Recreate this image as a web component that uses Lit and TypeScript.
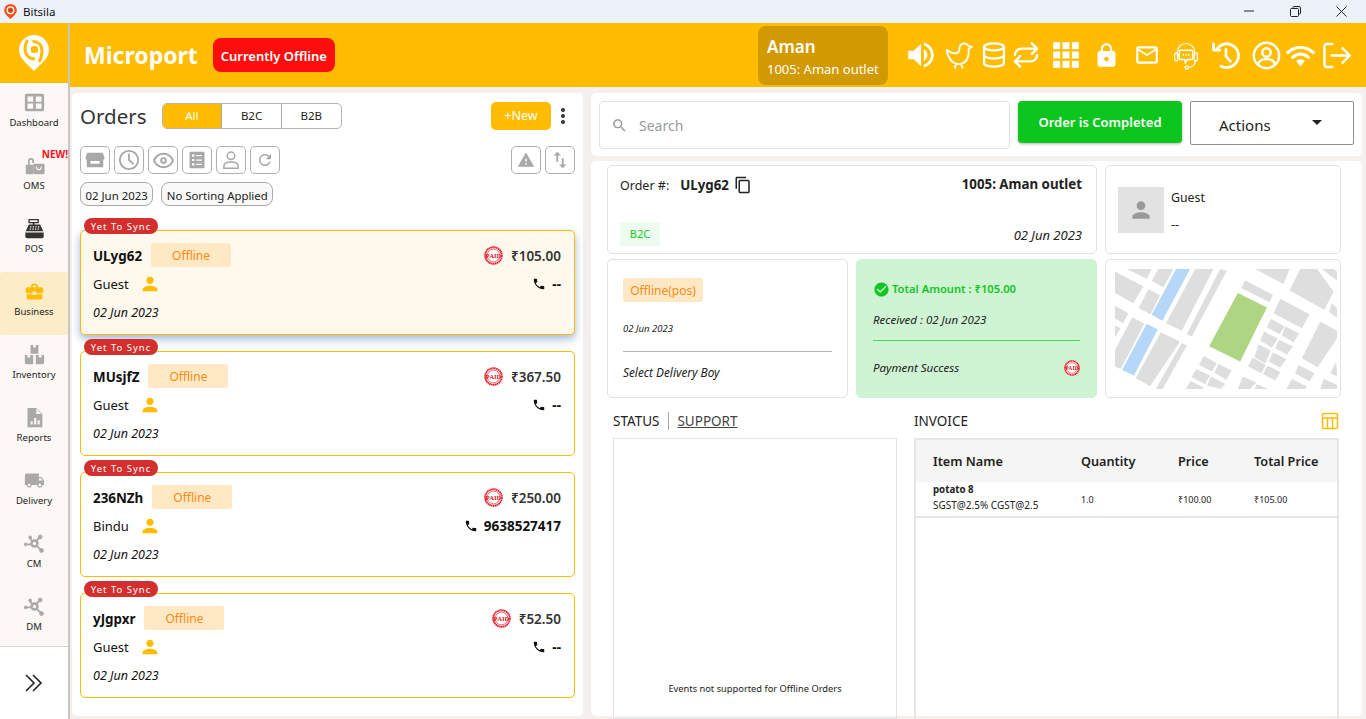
import { LitElement, css, html, svg } from 'lit'
import { customElement, property } from 'lit/decorators.js'

const P = {
  volume: 'M3 9v6h4l5 5V4L7 9H3zm13.5 3c0-1.77-1.02-3.29-2.5-4.03v8.05c1.48-.73 2.5-2.25 2.5-4.02zM14 3.23v2.06c2.89.86 5 3.54 5 6.71s-2.11 5.85-5 6.71v2.06c4.01-.91 7-4.49 7-8.77s-2.99-7.86-7-8.77z',
  lock: 'M18 8h-1V6c0-2.76-2.24-5-5-5S7 3.24 7 6v2H6c-1.1 0-2 .9-2 2v10c0 1.1.9 2 2 2h12c1.1 0 2-.9 2-2V10c0-1.1-.9-2-2-2zm-6 9c-1.1 0-2-.9-2-2s.9-2 2-2 2 .9 2 2-.9 2-2 2zm3.1-9H8.9V6c0-1.71 1.39-3.1 3.1-3.1 1.71 0 3.1 1.39 3.1 3.1v2z',
  mail: 'M20 4H4c-1.1 0-2 .9-2 2v12c0 1.1.9 2 2 2h16c1.1 0 2-.9 2-2V6c0-1.1-.9-2-2-2zm0 14H4V8l8 5 8-5v10zm-8-7L4 6h16l-8 5z',
  phone: 'M6.62 10.79c1.44 2.83 3.76 5.14 6.59 6.59l2.2-2.2c.27-.27.67-.36 1.02-.24 1.12.37 2.33.57 3.57.57.55 0 1 .45 1 1V20c0 .55-.45 1-1 1-9.39 0-17-7.61-17-17 0-.55.45-1 1-1h3.5c.55 0 1 .45 1 1 0 1.25.2 2.45.57 3.57.11.35.03.74-.25 1.02l-2.2 2.2z',
  person: 'M12 12c2.21 0 4-1.79 4-4s-1.79-4-4-4-4 1.79-4 4 1.79 4 4 4zm0 2c-2.67 0-8 1.34-8 4v2h16v-2c0-2.66-5.33-4-8-4z',
  search: 'M15.5 14h-.79l-.28-.27C15.41 12.59 16 11.11 16 9.5 16 5.91 13.09 3 9.5 3S3 5.91 3 9.5 5.91 16 9.5 16c1.61 0 3.09-.59 4.23-1.57l.27.28v.79l5 4.99L20.49 19l-4.99-5zm-6 0C7.01 14 5 11.99 5 9.5S7.01 5 9.5 5 14 7.01 14 9.5 11.99 14 9.5 14z',
  copy: 'M16 1H4c-1.1 0-2 .9-2 2v14h2V3h12V1zm3 4H8c-1.1 0-2 .9-2 2v14c0 1.1.9 2 2 2h11c1.1 0 2-.9 2-2V7c0-1.1-.9-2-2-2zm0 16H8V7h11v14z',
  check: 'M12 2C6.48 2 2 6.48 2 12s4.48 10 10 10 10-4.48 10-10S17.52 2 12 2zm-2 15l-5-5 1.41-1.41L10 14.17l7.59-7.59L19 8l-9 9z',
  warning: 'M1 21h22L12 2 1 21zm12-3h-2v-2h2v2zm0-4h-2v-4h2v4z',
  refresh: 'M17.65 6.35C16.2 4.9 14.21 4 12 4c-4.42 0-7.99 3.58-7.99 8s3.57 8 7.99 8c3.73 0 6.84-2.55 7.73-6h-2.08c-.82 2.33-3.04 4-5.65 4-3.31 0-6-2.69-6-6s2.69-6 6-6c1.66 0 3.14.69 4.22 1.78L13 11h7V4l-2.35 2.35z',
  eye: 'M12 6c3.8 0 7.2 2.1 8.8 6-1.6 3.9-5 6-8.8 6s-7.2-2.1-8.8-6C4.8 8.1 8.2 6 12 6zm0-2C7 4 2.7 7.3 1 12c1.7 4.7 6 8 11 8s9.3-3.3 11-8c-1.7-4.7-6-8-11-8zm0 4.5a3.5 3.5 0 1 0 0 7 3.5 3.5 0 0 0 0-7zm0 2a1.5 1.5 0 1 1 0 3 1.5 1.5 0 0 1 0-3z',
  swap: 'M16 17.01V10h-2v7.01h-3L15 21l4-3.99h-3zM9 3L5 6.99h3V14h2V6.99h3L9 3z',
  bag: 'M10 16v-1H3.01L3 19c0 1.11.89 2 2 2h14c1.11 0 2-.89 2-2v-4h-7v1h-4zm10-9h-4.01V5l-2-2h-4l-2 2v2H4c-1.1 0-2 .9-2 2v3c0 1.11.89 2 2 2h6v-2h4v2h6c1.1 0 2-.9 2-2V9c0-1.1-.9-2-2-2zm-6 0h-4V5h4v2z',
  truck: 'M20 8h-3V4H3c-1.1 0-2 .9-2 2v11h2c0 1.66 1.34 3 3 3s3-1.34 3-3h6c0 1.66 1.34 3 3 3s3-1.34 3-3h2v-5l-3-4zM6 18.5c-.83 0-1.5-.67-1.5-1.5s.67-1.5 1.5-1.5 1.5.67 1.5 1.5-.67 1.5-1.5 1.5zm13.5-9l1.96 2.5H17V9.5h2.5zm-1.5 9c-.83 0-1.5-.67-1.5-1.5s.67-1.5 1.5-1.5 1.5.67 1.5 1.5-.67 1.5-1.5 1.5z',
  store: 'M3 5.5C3 4.7 3.7 4 4.5 4h15c.8 0 1.5.7 1.5 1.5L22.5 10a2.4 2.4 0 0 1-1.5 1.6V19a1 1 0 0 1-1 1H4a1 1 0 0 1-1-1v-7.4A2.4 2.4 0 0 1 1.5 10L3 5.5zM7 13v3h10v-3H7z',
}

const fill = (d: string) => svg`<path d=${d} fill="currentColor"/>`

// header icons, w is the width of the slot each one sits in
const headerIcons = [
  { w: 34, size: 34, g: fill(P.volume) },
  { w: 42, size: 28, g: svg`<path fill="none" stroke="currentColor" stroke-width="1.6" stroke-linecap="round" stroke-linejoin="round" d="M1.5 7.5C4 9.5 7 11 9.5 10.5c2-.4 3-2 3-4.500a4 4 0 0 1 7.500-1.800l3 .8-2.800 1.600c.5 5-.5 9-3.200 11.400-3 2.600-8 2.500-11-.5C3.500 14.500 1.500 11 1.500 7.500zM9.500 19.500L8.500 23M13.500 19.500l1.500 3.500"/>` },
  { w: 28, size: 30, g: svg`<g fill="none" stroke="currentColor" stroke-width="2"><ellipse cx="12" cy="5" rx="8.5" ry="3"/><path d="M3.5 5v14c0 1.7 3.8 3 8.5 3s8.5-1.3 8.5-3V5M3.5 12c0 1.7 3.8 3 8.5 3s8.5-1.3 8.5-3"/></g>` },
  { w: 36, size: 28, g: svg`<g fill="none" stroke="currentColor" stroke-width="2" stroke-linecap="round" stroke-linejoin="round"><path d="M17 2l4.5 4.5L17 11M21 6.5H8A5.5 5.5 0 0 0 2.500 12M7 22l-4.500-4.500L7 13M3 17.500h13a5.500 5.500 0 0 0 5.500-5.500"/></g>` },
  { w: 44, size: 28, g: svg`<g fill="currentColor"><rect x="1" y="1" width="6" height="6"/><rect x="9" y="1" width="6" height="6"/><rect x="17" y="1" width="6" height="6"/><rect x="1" y="9" width="6" height="6"/><rect x="9" y="9" width="6" height="6"/><rect x="17" y="9" width="6" height="6"/><rect x="1" y="17" width="6" height="6"/><rect x="9" y="17" width="6" height="6"/><rect x="17" y="17" width="6" height="6"/></g>` },
  { w: 36, size: 27, g: fill(P.lock) },
  { w: 46, size: 26, g: fill(P.mail) },
  { w: 32, size: 33, g: svg`<g fill="none" stroke="currentColor" stroke-width=".9"><path d="M5.5 13V9.5a6.5 6.5 0 0 1 13 0V13"/><rect x="3.5" y="10" width="2.5" height="6" rx="1.2"/><rect x="18" y="10" width="2.5" height="6" rx="1.2"/><path d="M19 16c0 3-2.5 5-5.5 5"/><circle cx="12.5" cy="21" r="1.2"/><path d="M8 8h8a1 1 0 0 1 1 1v5a1 1 0 0 1-1 1h-3l-1.500 2.500L11 15H8a1 1 0 0 1-1-1V9a1 1 0 0 1 1-1z" stroke-width="1.1"/><path d="M9.500 11.500h1M11.500 11.500h1M13.500 11.500h1" stroke-width="1.2"/></g>` },
  { w: 48, size: 30, g: svg`<g fill="none" stroke="currentColor" stroke-width="2.2" stroke-linecap="round" stroke-linejoin="round"><path d="M4.5 7.5A9.5 9.5 0 1 1 12 22c-1.5 0-3-.4-4-1"/><path d="M2 3v5h5M12 7.5V13l3.500 4"/></g>` },
  { w: 32, size: 29, g: svg`<g fill="none" stroke="currentColor" stroke-width="2"><circle cx="12" cy="12" r="10.5"/><circle cx="12" cy="9.5" r="3.5"/><path d="M5 19c1-3 3.5-4 7-4s6 1 7 4"/></g>` },
  { w: 36, size: 29, g: svg`<g fill="none" stroke="currentColor" stroke-width="2.6" stroke-linecap="round"><path d="M1.5 9.5c6-5.5 15-5.5 21 0M5.5 13.5c4-3.5 9-3.5 13 0"/></g><path d="M8.5 16.5c2-1.5 5-1.5 7 0L12 21z" fill="currentColor"/>` },
  { w: 36, size: 29, g: svg`<g fill="none" stroke="currentColor" stroke-width="2" stroke-linecap="round" stroke-linejoin="round"><path d="M8.5 2.5H4a2 2 0 0 0-2 2v15a2 2 0 0 0 2 2h4.500M8 12h14.500M17 6l6 6-6 6"/></g>` },
]

const hub = svg`<g fill="currentColor" stroke="currentColor"><path d="M2 13h7M18 5l-5 5M19 19l-5.5-5.5M6.5 5.5L10 10" stroke-width="2.2" fill="none"/><circle cx="12" cy="12" r="3.4" fill="none" stroke-width="2.8"/><circle cx="2" cy="13" r="1.6"/><circle cx="18.5" cy="4.5" r="2.2"/><circle cx="20" cy="20" r="2.2"/><circle cx="7" cy="5" r="1.6"/></g>`

const navItems = [
  { label: 'Dashboard', g: svg`<path fill="currentColor" fill-rule="evenodd" d="M3 2h18a2 2 0 0 1 2 2v16a2 2 0 0 1-2 2H3a2 2 0 0 1-2-2V4a2 2 0 0 1 2-2zm1 3v6h6.5V5H4zm9.5 0v6H20V5h-6.5zM4 13v6h6.5v-6H4zm9.5 0v6H20v-6h-6.5z"/>` },
  { label: 'OMS', isNew: true, g: svg`<g fill="currentColor"><path d="M2 12a1 1 0 0 1 1-1h7.5v11H3a1 1 0 0 1-1-1z"/><path d="M4.5 11V7a3.5 3.5 0 0 1 7 0v2h-2V7a1.5 1.5 0 0 0-3 0v4z"/><path fill-rule="evenodd" d="M12 10h10a1.5 1.5 0 0 1 1.5 1.5V20a2 2 0 0 1-2 2h-9a2 2 0 0 1-2-2v-8.500A1.500 1.500 0 0 1 12 10zm1.500 3c.3 3 1.700 4.500 3.500 4.500s3.200-1.500 3.500-4.500h-1.300c-.3 2-1 3-2.200 3s-1.900-1-2.200-3z"/></g>` },
  { label: 'POS', dark: true, g: svg`<g fill="currentColor"><path fill-rule="evenodd" d="M5 1h12v5h-5v1.5h6.5L22 15H2l3.5-7.5H10V6H5zm1.5 1.5v2h9v-2zM7 9.5v1.3h1.5V9.5zm3 0v1.3h1.5V9.5zm3 0v1.3h1.5V9.5zm3 0v1.3h1.5V9.5zM6.500 12v1.300H8V12zm3 0v1.300H11V12zm3 0v1.300H14V12zm3 0v1.300H17V12z"/><path d="M1.5 16.5h21V21a2 2 0 0 1-2 2h-17a2 2 0 0 1-2-2z"/></g>` },
  { label: 'Business', active: true, g: fill(P.bag) },
  { label: 'Inventory', g: svg`<g fill="currentColor"><path d="M7.5 1h3v3h3V1h3v10h-9z"/><path d="M1 12.5h3v3h3v-3h3.5V23H3a2 2 0 0 1-2-2z"/><path d="M13.5 12.5H17v3h3v-3h3V21a2 2 0 0 1-2 2h-7.5z"/></g>` },
  { label: 'Reports', g: svg`<path fill="currentColor" fill-rule="evenodd" d="M4 1h10l7 7v15H4zm10 1v6h6zM7.5 16.5V20h2.5v-3.5zm4-4V20H14v-7.5zm4 2.500v5H18v-5z"/>` },
  { label: 'Delivery', g: fill(P.truck) },
  { label: 'CM', g: hub },
  { label: 'DM', g: hub },
]

const orders = [
  { id: 'ULyg62', name: 'Guest', phone: '--', price: '₹105.00', active: true },
  { id: 'MUsjfZ', name: 'Guest', phone: '--', price: '₹367.50' },
  { id: '236NZh', name: 'Bindu', phone: '9638527417', price: '₹250.00' },
  { id: 'yJgpxr', name: 'Guest', phone: '--', price: '₹52.50' },
]

const toolIcons = [
  { size: 22, g: fill(P.store) },
  { size: 22, g: svg`<g fill="none" stroke="currentColor" stroke-width="2"><circle cx="12" cy="12" r="10"/><path d="M12 5.5V12l4.5 4" stroke-linecap="round"/></g>` },
  { size: 23, g: fill(P.eye) },
  { size: 20, g: svg`<path fill="currentColor" fill-rule="evenodd" d="M4 2h16a1 1 0 0 1 1 1v18a1 1 0 0 1-1 1H4a1 1 0 0 1-1-1V3a1 1 0 0 1 1-1zm2 3.5V8h3V5.5zm5 .5v1.500h7V6zm-5 4.800v2.500h3v-2.500zm5 .5v1.500h7v-1.500zM6 16v2.500h3V16zm5 .5V18h7v-1.500z"/>` },
  { size: 20, g: svg`<g fill="none" stroke="currentColor" stroke-width="1.8"><circle cx="12" cy="7" r="4.5"/><path d="M3.5 22v-2.5c0-3 3-5 8.5-5s8.5 2 8.5 5V22z"/></g>` },
  { size: 18, g: fill(P.refresh) },
]

const mapGray = [
  '45,40 130,85 100,135 45,105', '80,33 155,33 140,62', '175,33 220,33 190,88 155,68', '145,93 180,112 152,168 116,150',
  '285,33 340,33 245,218 198,195', '360,33 380,38 275,235 260,228', '45,143 85,165 70,195 45,182', '45,203 62,210 45,237',
  '97,177 133,197 62,332 45,325 45,275', '182,222 240,250 150,384 107,360', '245,255 260,262 188,392 167,392',
  '435,67 518,110 508,132 423,90', '465,33 568,33 550,78', '600,33 650,33 700,100 672,155 568,97', '665,33 700,33 710,40 710,68',
  '540,122 628,168 605,210 520,165', '512,182 553,205 538,228 500,207', '555,205 597,226 580,252 545,232', '492,220 533,242 515,268 480,248',
  '537,245 578,265 560,290 525,270', '475,258 512,278 495,316 462,297', '518,282 558,303 540,328 505,310', '457,298 497,320 483,345 443,325',
  '502,322 540,342 525,367 488,347', '660,190 710,218 710,240 652,327 605,300', '695,135 710,150 710,178 686,162', '595,320 643,345 628,370 584,345',
  '708,310 710,355 690,345', '575,362 620,385 615,392 558,392', '670,362 710,380 710,392 660,392', '310,293 350,315 335,340 297,320',
  '355,317 395,337 378,365 343,343', '288,332 330,352 315,378 275,357', '333,355 375,377 362,392 320,382', '272,368 310,388 310,392 257,392',
  '428,355 468,373 450,392 413,392', '470,378 505,392 462,392',
]

function icon(g: unknown, size: number) {
  return html`<svg width=${size} height=${size} viewBox="0 0 24 24">${g}</svg>`
}

function paid(size: number) {
  return html`<svg width=${size} height=${size} viewBox="0 0 24 24">
    <circle cx="12" cy="12" r="10.5" fill="#fff" stroke="#ea1c2a" stroke-width="2.4" stroke-dasharray="2 .5"/>
    <circle cx="12" cy="12" r="8" fill="none" stroke="#ea1c2a" stroke-width=".8"/>
    <text x="12" y="15" text-anchor="middle" font-size="8.5" font-weight="800" fill="#d81b28" font-family="Liberation Serif, serif">PAID</text>
  </svg>`
}

@customElement('order-card')
class OrderCard extends LitElement {
  static styles = css`
    :host { display: block; }
    .card {
      position: relative;
      height: 105px;
      box-sizing: border-box;
      border: 1px solid #ffbc00;
      border-radius: 5px;
      background: #fff;
      padding: 12px 13px 0 12px;
      color: #111;
    }
    .card.active {
      background: #fff9ed;
      box-shadow: 0 4px 8px rgba(40, 100, 170, .45);
    }
    .sync {
      position: absolute;
      left: 3px;
      top: -13px;
      height: 16px;
      width: 74px;
      border-radius: 8px;
      background: #d32f2f;
      color: #fff;
      font-size: 9.5px;
      letter-spacing: 1px;
      line-height: 17px;
      text-align: center;
    }
    .row { display: flex; align-items: center; justify-content: space-between; }
    .row1 { height: 24px; }
    .row2 { height: 24px; margin-top: 5px; font-size: 13px; }
    .left { display: flex; align-items: center; }
    .id { font-weight: 700; font-size: 13.4px; margin-right: 9px; padding-top: 1px; }
    .tag {
      width: 80px;
      height: 24px;
      line-height: 26px;
      text-align: center;
      background: #ffe9c4;
      color: #ff8a14;
      font-size: 12px;
      border-radius: 2px;
    }
    .price { font-weight: 600; font-size: 13.5px; color: #333; margin-left: 8px; padding-top: 1px; }
    .stamp { display: flex; }
    .who { color: #ffbc00; margin-left: 10px; display: flex; }
    .phone { display: flex; align-items: center; gap: 6px; font-weight: 700; font-size: 13.5px; }
    .date { font-style: italic; font-size: 12.5px; margin-top: 8px; line-height: 18px; }
  `
  @property({ type: Object }) order: any = {}

  render() {
    const o = this.order
    return html`
      <div class="card ${o.active ? 'active' : ''}">
        <div class="sync">Yet To Sync</div>
        <div class="row row1">
          <div class="left"><span class="id">${o.id}</span><span class="tag">Offline</span></div>
          <div class="left"><span class="stamp">${paid(19)}</span><span class="price">${o.price}</span></div>
        </div>
        <div class="row row2">
          <div class="left">${o.name}<span class="who">${icon(fill(P.person), 22)}</span></div>
          <div class="phone">${icon(fill(P.phone), 14)}${o.phone}</div>
        </div>
        <div class="date">02 Jun 2023</div>
      </div>
    `
  }
}

@customElement('app-root')
class AppRoot extends LitElement {
  static styles = css`
    :host {
      display: flex;
      flex-direction: column;
      height: 100vh;
      overflow: hidden;
      font-family: "Noto Sans", "Open Sans", sans-serif;
      background: #f4f0ee;
      color: #222;
    }
    .titlebar {
      height: 23px;
      flex: none;
      background: #edf2fa;
      display: flex;
      align-items: center;
      font-size: 11.5px;
      color: #111;
      padding-left: 4px;
    }
    .titlebar .name { margin-left: 6px; }
    .winctl { margin-left: auto; margin-right: 2px; display: flex; }
    .winctl span { width: 46px; display: flex; justify-content: center; color: #222; }
    .frame { flex: 1; display: flex; min-height: 0; }

    .side {
      width: 68px;
      flex: none;
      border-right: 2px solid #c9c5c2;
      background: #fdf8f5;
      display: flex;
      flex-direction: column;
    }
    .logo {
      height: 60px;
      flex: none;
      background: #ffbc00;
      display: flex;
      align-items: center;
      justify-content: center;
      color: #fff;
    }
    .nav { flex: 1; min-height: 0; overflow: hidden; }
    .nav-item {
      position: relative;
      height: 63px;
      box-sizing: border-box;
      padding-top: 9px;
      display: flex;
      flex-direction: column;
      align-items: center;
      gap: 3px;
      color: #a9a9a9;
      border-radius: 3px;
    }
    .nav-item span { font-size: 9.5px; color: #222; line-height: 14px; }
    .nav-item.dark { color: #333; }
    .nav-item.active { background: #fdecc8; color: #ffbc00; }
    .new {
      position: absolute;
      right: 0;
      top: 1px;
      color: #ff0d1d;
      font-size: 10px;
      font-weight: 700;
      font-style: normal;
    }
    .side-foot {
      height: 72px;
      flex: none;
      background: #fff;
      border-top: 1px solid #d5d5d5;
      display: flex;
      align-items: center;
      justify-content: center;
      color: #222;
    }

    .main { flex: 1; min-width: 0; display: flex; flex-direction: column; }
    .topbar {
      height: 64px;
      flex: none;
      background: #ffbc00;
      display: flex;
      align-items: center;
      color: #fff;
      padding-left: 14px;
    }
    .brand { font-size: 23px; font-weight: 700; margin-right: 15px; }
    .offline {
      height: 34px;
      line-height: 36px;
      width: 122px;
      text-align: center;
      background: #ff0d0d;
      border-radius: 8px;
      font-size: 13px;
      font-weight: 600;
    }
    .outlet {
      margin-left: auto;
      width: 130px;
      height: 59px;
      box-sizing: border-box;
      background: #d19a00;
      border-radius: 8px;
      padding: 9px 9px;
    }
    .outlet b { display: block; font-size: 17px; font-weight: 600; line-height: 24px; }
    .outlet small { display: block; font-size: 13px; line-height: 20px; white-space: nowrap; }
    .topicons { display: flex; align-items: center; margin: 0 12px 0 16px; }
    .topicons div { display: flex; justify-content: center; }

    .content { flex: 1; min-height: 0; display: flex; gap: 8px; padding: 6px 4px 3px 2px; }
    .orders {
      width: 511px;
      flex: none;
      box-sizing: border-box;
      background: #fff;
      border-radius: 5px;
      padding: 9px 8px;
    }
    .orders-head { display: flex; align-items: center; height: 28px; }
    .orders-head h1 { margin: 0 15px 0 0; font-size: 20.5px; font-weight: 400; color: #333; }
    .seg { display: flex; height: 26px; border: 1px solid #b5b5b5; border-radius: 5px; overflow: hidden; box-sizing: border-box; width: 180px; }
    .seg div { flex: 1; text-align: center; font-size: 11.5px; line-height: 24px; border-left: 1px solid #a5a5a5; color: #222; }
    .seg div:first-child { background: #ffbc00; color: #fff; border-left: none; }
    .newbtn {
      margin-left: auto;
      width: 60px;
      height: 28px;
      line-height: 28px;
      text-align: center;
      background: #ffbc00;
      color: #fff;
      border-radius: 5px;
      font-size: 12.5px;
    }
    .kebab { width: 24px; display: flex; justify-content: center; color: #333; }
    .tools { display: flex; gap: 4px; margin-top: 16px; }
    .tool {
      width: 30px;
      height: 28px;
      box-sizing: border-box;
      border: 1px solid #b0b0b0;
      border-radius: 5px;
      display: flex;
      align-items: center;
      justify-content: center;
      color: #a8a8a8;
    }
    .tool.push { margin-left: auto; }
    .chips { display: flex; gap: 8px; margin-top: 8px; }
    .chip {
      height: 24px;
      box-sizing: border-box;
      border: 1px solid #aaa;
      border-radius: 8px;
      background: #f9f9f9;
      padding: 5px 4.5px 0;
      font-size: 11.4px;
      line-height: 16px;
      white-space: nowrap;
      overflow: hidden;
      color: #222;
    }
    .list { display: flex; flex-direction: column; gap: 16px; margin-top: 24px; }

    .right { width: 771px; flex: none; display: flex; flex-direction: column; gap: 5px; }
    .searchbar {
      height: 63px;
      flex: none;
      box-sizing: border-box;
      background: #fff;
      border-radius: 5px;
      padding: 8px;
      display: flex;
      gap: 8px;
      align-items: flex-start;
    }
    .search {
      width: 411px;
      height: 48px;
      box-sizing: border-box;
      border: 1px solid #e2e2e2;
      border-radius: 4px;
      display: flex;
      align-items: center;
      padding-left: 11px;
      gap: 11px;
      color: #9a9a9a;
      font-size: 14px;
    }
    .done {
      width: 164px;
      height: 42px;
      line-height: 42px;
      text-align: center;
      background: #0cc61e;
      border-radius: 4px;
      color: #fff;
      font-size: 13px;
      font-weight: 600;
      box-shadow: 0 1px 3px rgba(0, 0, 0, .3);
    }
    .actions {
      width: 164px;
      height: 44px;
      box-sizing: border-box;
      border: 1px solid #8f8f8f;
      border-radius: 2px;
      display: flex;
      align-items: center;
      justify-content: space-between;
      padding: 4px 31px 0 28px;
      font-size: 15px;
      color: #222;
    }
    .actions svg { margin-top: -6px; }
    .detail {
      flex: 1;
      min-height: 0;
      background: #fff;
      border-radius: 5px;
      padding: 4px 16px;
    }
    .cards {
      display: grid;
      grid-template-columns: 241px 241px 236px;
      grid-template-rows: 89px 139px;
      gap: 5px 8px;
    }
    .box {
      box-sizing: border-box;
      border: 1px solid #e2e2e2;
      border-radius: 5px;
      font-size: 11.5px;
      color: #222;
      min-width: 0;
    }
    .order-box { grid-column: span 2; padding: 10px 14px 7px 12px; display: flex; flex-direction: column; justify-content: space-between; }
    .line { display: flex; align-items: center; justify-content: space-between; }
    .ordno { display: flex; align-items: center; font-size: 12.5px; }
    .ordno b { margin: 0 5px 0 11px; font-size: 13.3px; font-weight: 700; }
    .outname { font-weight: 700; font-size: 13.3px; margin-top: -2px; }
    .b2c {
      width: 40px;
      height: 24px;
      line-height: 24px;
      text-align: center;
      background: #eefbef;
      color: #19c92c;
      font-size: 11px;
      border-radius: 2px;
    }
    .italic { font-style: italic; }
    .date-r { font-size: 13px; margin-top: 2px; }
    .guest { display: flex; padding: 21px 12px; gap: 7px; font-size: 12.3px; }
    .avatar { width: 46px; height: 46px; background: #e2e2e2; color: #999; display: flex; align-items: center; justify-content: center; flex: none; }
    .guest p { margin: 0; line-height: 18px; }
    .guest p:first-child { margin-top: 2px; }
    .guest p + p { margin-top: 9px; }
    .delivery { padding: 18px 15px 0; }
    .tag {
      display: inline-block;
      width: 80px;
      height: 24px;
      line-height: 26px;
      text-align: center;
      background: #ffe9c4;
      color: #ff8a14;
      font-size: 12px;
      border-radius: 2px;
    }
    .small-date { font-size: 9.5px; margin-top: 20px; line-height: 14px; }
    .rule { height: 1px; background: #b5b5b5; margin: 15px 0 12px; }
    .sel { font-size: 11.8px; }
    .pay { background: #cff4d3; border-color: #cff4d3; padding: 20px 16px 0; }
    .pay .total { display: flex; align-items: center; gap: 2px; color: #12c523; font-weight: 600; font-size: 11.2px; line-height: 18px; }
    .pay .recv { margin-top: 14px; line-height: 16px; }
    .pay .rule { background: #4ed160; margin: 12px 0 19px; }
    .pay .line { line-height: 16px; }
    .map { padding: 9px; overflow: hidden; }
    .map svg { display: block; }
    .lower { display: grid; grid-template-columns: 284px 425px; gap: 0 17px; margin: 12px 0 0 6px; }
    .heading { height: 22px; display: flex; align-items: center; font-size: 13.5px; color: #222; margin-bottom: 6px; }
    .heading .sep { width: 1px; height: 18px; background: #aaa; margin: 0 8px 0 9px; }
    .heading .link { text-decoration: underline; color: #444; }
    .heading svg { margin-left: auto; color: #ffbc00; }
    .status {
      height: 281px;
      box-sizing: border-box;
      border: 1px solid #e2e2e2;
      display: flex;
      align-items: flex-end;
      justify-content: center;
      font-size: 9.3px;
      padding-bottom: 23px;
      color: #222;
    }
    .invoice { height: 281px; box-sizing: border-box; border: 2px solid #e6e6e6; border-bottom: none; font-size: 9px; }
    .trow { display: grid; grid-template-columns: 165px 97px 76px 1fr; align-items: center; }
    .trow > div:first-child { padding-left: 17px; }
    .thead { height: 42px; background: #f5f5f5; font-size: 12.7px; font-weight: 600; }
    .tbody { height: 36px; border-bottom: 2px solid #e6e6e6; box-sizing: border-box; color: #222; }
    .tbody > div { padding-top: 1px; }
    .tbody b { display: block; font-size: 9.7px; font-weight: 700; line-height: 12px; margin-top: -3px; }
    .tbody small { display: block; font-size: 10px; line-height: 14px; margin-top: 2px; white-space: nowrap; }
  `

  render() {
    return html`
      <div class="titlebar">
        <svg width="13" height="15" viewBox="0 0 30 36">
          <path fill="#f2511b" d="M15 0C6.7 0 0 6.7 0 15c0 8 8 15 15 21 7-6 15-13 15-21C30 6.7 23.3 0 15 0z"/>
          <circle cx="15" cy="15" r="8" fill="none" stroke="#fff" stroke-width="3"/>
          <circle cx="15" cy="15" r="3" fill="#c9302c"/>
        </svg>
        <span class="name">Bitsila</span>
        <div class="winctl">
          <span><svg width="10" height="10" viewBox="0 0 10 10"><path d="M0 5h10" stroke="currentColor"/></svg></span>
          <span><svg width="11" height="11" viewBox="0 0 11 11" fill="none" stroke="currentColor"><rect x=".5" y="2.5" width="8" height="8" rx="1"/><path d="M3 2.5v-1a1 1 0 0 1 1-1h5A1.500 1.500 0 0 1 10.500 2v5a1 1 0 0 1-1 1h-1"/></svg></span>
          <span><svg width="11" height="11" viewBox="0 0 11 11"><path d="M.5.5l10 10M10.5.5l-10 10" stroke="currentColor"/></svg></span>
        </div>
      </div>
      <div class="frame">
        <aside class="side">
          <div class="logo">
            <svg width="30" height="36" viewBox="0 0 30 36">
              <path fill="#fff" d="M15 0C6.7 0 0 6.7 0 15c0 7 6 12 12 18l3 3 3-3c6-6 12-11 12-18C30 6.7 23.3 0 15 0z"/>
              <g fill="none" stroke="#ffbc00" stroke-width="3">
                <path d="M8.500 5C6.500 8 6 11 6 14c0 6 4.500 10 10 10"/>
                <path d="M13.500 6.500C19 6 23 10 23 16c0 4-1 8-3 11"/>
              </g>
              <rect x="12" y="11" width="7" height="7" rx="2.500" fill="#ffbc00"/>
            </svg>
          </div>
          <div class="nav">
            ${navItems.map(n => html`
              <div class="nav-item ${n.active ? 'active' : ''} ${n.dark ? 'dark' : ''}">
                ${n.isNew ? html`<em class="new">NEW!</em>` : ''}
                ${icon(n.g, 21)}
                <span>${n.label}</span>
              </div>
            `)}
          </div>
          <div class="side-foot">
            <svg width="20" height="20" viewBox="0 0 20 20" fill="none" stroke="currentColor" stroke-width="1.6">
              <path d="M2 2l8 8-8 8M9 2l8 8-8 8"/>
            </svg>
          </div>
        </aside>
        <div class="main">
          <header class="topbar">
            <div class="brand">Microport</div>
            <div class="offline">Currently Offline</div>
            <div class="outlet"><b>Aman</b><small>1005: Aman outlet</small></div>
            <div class="topicons">
              ${headerIcons.map(i => html`<div style="width:${i.w}px">${icon(i.g, i.size)}</div>`)}
            </div>
          </header>
          <div class="content">
            <section class="orders">
              <div class="orders-head">
                <h1>Orders</h1>
                <div class="seg"><div>All</div><div>B2C</div><div>B2B</div></div>
                <div class="newbtn">+New</div>
                <div class="kebab">
                  <svg width="6" height="18" viewBox="0 0 6 18" fill="currentColor"><circle cx="3" cy="3" r="2"/><circle cx="3" cy="9" r="2"/><circle cx="3" cy="15" r="2"/></svg>
                </div>
              </div>
              <div class="tools">
                ${toolIcons.map(t => html`<div class="tool">${icon(t.g, t.size)}</div>`)}
                <div class="tool push">${icon(fill(P.warning), 18)}</div>
                <div class="tool">${icon(fill(P.swap), 22)}</div>
              </div>
              <div class="chips">
                <div class="chip">02 Jun 2023</div>
                <div class="chip">No Sorting Applied</div>
              </div>
              <div class="list">
                ${orders.map(o => html`<order-card .order=${o}></order-card>`)}
              </div>
            </section>
            <div class="right">
              <div class="searchbar">
                <div class="search">${icon(fill(P.search), 17)}<span>Search</span></div>
                <div class="done">Order is Completed</div>
                <div class="actions">
                  <span>Actions</span>
                  <svg width="10" height="5" viewBox="0 0 10 5" fill="#222"><path d="M0 0h10L5 5z"/></svg>
                </div>
              </div>
              <div class="detail">
                <div class="cards">
                  <div class="box order-box">
                    <div class="line">
                      <div class="ordno">Order #: <b>ULyg62</b>${icon(fill(P.copy), 18)}</div>
                      <div class="outname">1005: Aman outlet</div>
                    </div>
                    <div class="line">
                      <div class="b2c">B2C</div>
                      <div class="italic date-r">02 Jun 2023</div>
                    </div>
                  </div>
                  <div class="box guest">
                    <div class="avatar">${icon(fill(P.person), 26)}</div>
                    <div><p>Guest</p><p>--</p></div>
                  </div>
                  <div class="box delivery">
                    <span class="tag">Offline(pos)</span>
                    <div class="small-date italic">02 Jun 2023</div>
                    <div class="rule"></div>
                    <div class="italic sel">Select Delivery Boy</div>
                  </div>
                  <div class="box pay">
                    <div class="total">${icon(fill(P.check), 17)}Total Amount : ₹105.00</div>
                    <div class="recv italic">Received : 02 Jun 2023</div>
                    <div class="rule"></div>
                    <div class="line"><span class="italic">Payment Success</span>${paid(16)}</div>
                  </div>
                  <div class="box map">
                    <svg width="222" height="120" viewBox="45 33 665 359">
                      ${mapGray.map(p => svg`<polygon points=${p} fill="#dedede"/>`)}
                      <polygon points="228,33 270,33 187,188 155,170" fill="#b6d8f8"/>
                      <polygon points="140,197 173,214 102,352 66,335" fill="#b6d8f8"/>
                      <polygon points="413,105 500,148 420,310 327,264" fill="#aed581"/>
                    </svg>
                  </div>
                </div>
                <div class="lower">
                  <div>
                    <div class="heading">STATUS<span class="sep"></span><span class="link">SUPPORT</span></div>
                    <div class="status">Events not supported for Offline Orders</div>
                  </div>
                  <div>
                    <div class="heading">INVOICE
                      <svg width="18" height="18" viewBox="0 0 18 18" fill="none" stroke="currentColor" stroke-width="1.5"><rect x="1.5" y="1.5" width="15" height="15" rx="1.5"/><path d="M1.5 6h15M6.5 6v10.5M11.5 6v10.5"/></svg>
                    </div>
                    <div class="invoice">
                      <div class="trow thead"><div>Item Name</div><div>Quantity</div><div>Price</div><div>Total Price</div></div>
                      <div class="trow tbody">
                        <div><b>potato 8</b><small>SGST@2.5% CGST@2.5</small></div>
                        <div>1.0</div><div>₹100.00</div><div>₹105.00</div>
                      </div>
                    </div>
                  </div>
                </div>
              </div>
            </div>
          </div>
        </div>
      </div>
    `
  }
}
